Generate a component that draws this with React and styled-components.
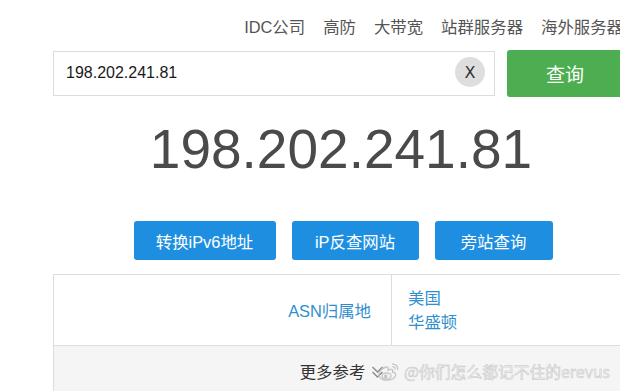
import React from "react";
import styled, { createGlobalStyle } from "styled-components";

const Global = createGlobalStyle`
  html, body { margin: 0; padding: 0; background: #fff; overflow: hidden; }
  body { font-family: "Liberation Sans", "Noto Sans CJK SC", sans-serif; }
  * { box-sizing: border-box; }
`;

const Page = styled.div`
  position: relative;
  width: 620px;
  height: 391px;
  overflow: hidden;
`;

const Container = styled.div`
  margin-left: 53px;
  width: 570px;
  display: flex;
  flex-direction: column;
`;

const Nav = styled.nav`
  display: flex;
  justify-content: flex-end;
  gap: 18px;
  padding-top: 17px;
  height: 50px;
  font-size: 16.4px;
  line-height: 20px;
  color: #555;
  white-space: nowrap;
`;

const NavItem = styled.span``;

const SearchRow = styled.div`
  display: flex;
  align-items: center;
  gap: 12px;
  height: 46px;
`;

const InputBox = styled.div`
  flex: 1;
  height: 45px;
  display: flex;
  align-items: center;
  border: 1px solid #dcdcdc;
  padding: 0 9px 0 12px;
  background: #fff;
`;

const Input = styled.input`
  flex: 1;
  border: none;
  outline: none;
  font-family: "Liberation Sans", sans-serif;
  font-size: 16px;
  color: #1a1a1a;
  background: transparent;
  padding: 0;
`;

const ClearBtn = styled.span`
  width: 30px;
  height: 30px;
  border-radius: 50%;
  background: #dedede;
  color: #333;
  font-family: "DejaVu Sans", sans-serif;
  font-size: 16px;
  display: flex;
  align-items: center;
  justify-content: center;
  margin-top: -2px;
`;

const SearchBtn = styled.button`
  width: 116px;
  height: 47px;
  border: none;
  border-radius: 3px;
  background: #4cae50;
  color: #fff;
  font-family: "Noto Sans CJK SC", sans-serif;
  font-size: 19px;
  padding: 0;
`;

const BigIp = styled.div`
  margin-top: 23px;
  text-align: center;
  font-family: "Liberation Sans", sans-serif;
  font-size: 55px;
  line-height: 60px;
  color: #4a4a4a;
  padding-left: 6px;
`;

const ActionRow = styled.div`
  margin-top: 42px;
  display: flex;
  justify-content: center;
  gap: 16px;
  padding-left: 10px;
`;

const ActionBtn = styled.button`
  width: ${(p) => p.$w}px;
  height: 39px;
  border: none;
  border-radius: 3px;
  background: #1e8fe0;
  color: #fff;
  font-family: "Liberation Sans", "Noto Sans CJK SC", sans-serif;
  font-size: 16.4px;
  padding: 0;
`;

const Table = styled.div`
  margin-top: 14px;
  border: 1px solid #dddddd;
  display: flex;
  flex-direction: column;
`;

const Row = styled.div`
  display: flex;
  height: 71px;
  border-bottom: 1px solid #dddddd;
`;

const LabelCell = styled.div`
  width: 338px;
  border-right: 1px solid #dddddd;
  display: flex;
  align-items: center;
  justify-content: flex-end;
  padding-right: 20px;
  color: #2f8fce;
  font-size: 16.4px;
`;

const ValueCell = styled.div`
  flex: 1;
  display: flex;
  flex-direction: column;
  justify-content: center;
  padding-left: 16px;
  color: #2f8fce;
  font-size: 16.4px;
  line-height: 24px;
`;

const MoreRow = styled.div`
  height: 60px;
  background: #f5f5f5;
  display: flex;
  justify-content: center;
  align-items: flex-start;
  padding-top: 16px;
  gap: 6px;
  color: #333;
  font-size: 16.4px;
  line-height: 20px;
  padding-left: 8px;
`;

const Watermark = styled.div`
  position: absolute;
  left: 377px;
  top: 360px;
  display: flex;
  align-items: center;
  gap: 3px;
  font-family: "Noto Sans CJK SC", sans-serif;
  font-size: 15.8px;
  color: #f4f4f4;
  -webkit-text-stroke: 0.5px #c4c4c4;
  white-space: nowrap;
`;

const WeiboLogo = () => (
  <svg width="24" height="20" viewBox="0 0 24 20" fill="none" stroke="#c6c6c6" strokeWidth="1.4">
    <path d="M9 5 C5 6 1.5 10 2 13.5 C2.6 17.5 8 18.6 12 18 C16.5 17.3 19.5 14.5 18.5 11.8 C18 10.3 16.4 10 15.6 10.2 C16.3 8.5 15.6 7 13.4 7.4 C12.2 7.6 11.3 8.2 11 8.3 C11.5 6.3 11 4.6 9 5 Z" />
    <ellipse cx="9.5" cy="14" rx="4.5" ry="3" />
    <circle cx="8.7" cy="14.3" r="1.2" fill="#c6c6c6" />
    <path d="M15 2.2 C18.5 1.6 21.5 4.5 20.6 8" />
    <path d="M15.3 4.6 C17 4.4 18.4 5.8 18 7.4" />
  </svg>
);

const Chevrons = () => (
  <svg width="13" height="14" viewBox="0 0 13 14" fill="none" stroke="#888" strokeWidth="1.3" style={{ marginTop: 3 }}>
    <polyline points="1.5,2 6.5,7 11.5,2" />
    <polyline points="1.5,7 6.5,12 11.5,7" />
  </svg>
);

export default function App() {
  return (
    <Page>
      <Global />
      <Container>
        <Nav>
          <NavItem>IDC公司</NavItem>
          <NavItem>高防</NavItem>
          <NavItem>大带宽</NavItem>
          <NavItem>站群服务器</NavItem>
          <NavItem>海外服务器</NavItem>
        </Nav>
        <SearchRow>
          <InputBox>
            <Input defaultValue="198.202.241.81" />
            <ClearBtn>X</ClearBtn>
          </InputBox>
          <SearchBtn>查询</SearchBtn>
        </SearchRow>
        <BigIp>198.202.241.81</BigIp>
        <ActionRow>
          <ActionBtn $w={142}>转换iPv6地址</ActionBtn>
          <ActionBtn $w={127}>iP反查网站</ActionBtn>
          <ActionBtn $w={118}>旁站查询</ActionBtn>
        </ActionRow>
        <Table>
          <Row>
            <LabelCell>ASN归属地</LabelCell>
            <ValueCell>
              <span>美国</span>
              <span>华盛顿</span>
            </ValueCell>
          </Row>
          <MoreRow>
            <span>更多参考</span>
            <Chevrons />
          </MoreRow>
        </Table>
      </Container>
      <Watermark>
        <WeiboLogo />
        <span>@你们怎么都记不住的erevus</span>
      </Watermark>
    </Page>
  );
}
